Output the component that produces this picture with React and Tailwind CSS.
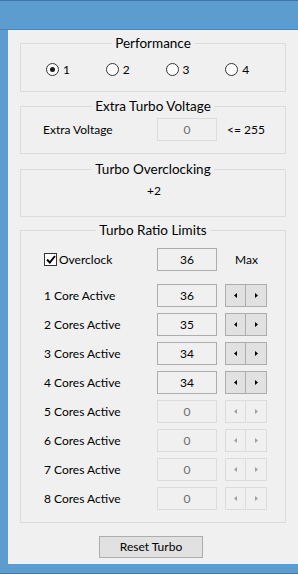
import React, {useState} from 'react';

const font = {fontFamily: '"Lato", "Liberation Sans", sans-serif'};

function GroupBox({title, className, children}) {
    return (
        <div className={"relative mx-[12px] border border-[#dcdcdc] " + className}>
            <div className="absolute left-0 right-0 -top-[10px] flex justify-center">
                <span className="bg-[#f0f0f0] px-[3px] text-[13.5px] leading-[18px] text-black">{title}</span>
            </div>
            {children}
        </div>
    );
}

function Radio({label, checked, onClick}) {
    return (
        <div className="flex w-[60px] items-center gap-[4px]" onClick={onClick}>
            <div className="flex h-[13px] w-[13px] items-center justify-center rounded-full border border-[#333] bg-white">
                {checked && <div className="h-[5px] w-[5px] rounded-full bg-[#1a1a1a]"/>}
            </div>
            <span className="text-[12px] leading-[15px]">{label}</span>
        </div>
    );
}

function ValueBox({value, enabled}) {
    return (
        <div
            className={"flex h-[23px] w-[60px] items-center justify-center border bg-[#f0f0f0] text-[12px] " +
                (enabled ? "border-[#adadad] text-black" : "border-[#dcdcdc] text-[#6d6d6d]")}>
            {value}
        </div>
    );
}

function Spinner({enabled}) {
    const btn = enabled
        ? "border-[#adadad] bg-[#e1e1e1]"
        : "border-[#dcdcdc] bg-[#f0f0f0]";
    const arrow = enabled ? "#000" : "#a0a0a0";
    return (
        <div className="flex h-[23px]">
            <div className={"flex w-[21px] items-center justify-center border " + btn}>
                <svg width="3" height="5" viewBox="0 0 3 5">
                    <path d="M3 0 L0 2.5 L3 5 Z" fill={arrow}/>
                </svg>
            </div>
            <div className={"-ml-px flex w-[22px] items-center justify-center border " + btn}>
                <svg width="3" height="5" viewBox="0 0 3 5">
                    <path d="M0 0 L3 2.5 L0 5 Z" fill={arrow}/>
                </svg>
            </div>
        </div>
    );
}

const cores = [
    {label: "1 Core Active", value: 36, enabled: true},
    {label: "2 Cores Active", value: 35, enabled: true},
    {label: "3 Cores Active", value: 34, enabled: true},
    {label: "4 Cores Active", value: 34, enabled: true},
    {label: "5 Cores Active", value: 0, enabled: false},
    {label: "6 Cores Active", value: 0, enabled: false},
    {label: "7 Cores Active", value: 0, enabled: false},
    {label: "8 Cores Active", value: 0, enabled: false},
];

export default function App() {
    // selected performance mode
    const [mode, setMode] = useState(1);

    return (
        <div className="flex h-[574px] w-[298px] flex-col overflow-hidden border-y border-[#3f78a8] bg-[#5d9ccf] text-black" style={font}>
            {/* title bar */}
            <div className="h-[29px] shrink-0 border-b border-[#4e86b8]"/>

            <div className="ml-[8px] flex h-[534px] flex-col bg-[#f0f0f0]">
                <GroupBox title="Performance" className="mt-[13px] h-[49px]">
                    <div className="mt-[18px] flex pl-[25px]">
                        {[1, 2, 3, 4].map((n) => (
                            <Radio key={n} label={n} checked={mode === n} onClick={() => setMode(n)}/>
                        ))}
                    </div>
                </GroupBox>

                <GroupBox title="Extra Turbo Voltage" className="mt-[14px] h-[48px]">
                    <div className="mt-[11px] flex items-center">
                        <span className="w-[136px] pl-[22px] text-[12px]">Extra Voltage</span>
                        <ValueBox value={0} enabled={false}/>
                        <span className="ml-[10px] text-[12px]">&lt;= 255</span>
                    </div>
                </GroupBox>

                <GroupBox title="Turbo Overclocking" className="mt-[15px] h-[48px]">
                    <div className="mt-[13px] pl-[126px] text-[12px] leading-[16px]">+2</div>
                </GroupBox>

                <GroupBox title="Turbo Ratio Limits" className="mt-[13px] h-[293px]">
                    <div className="mt-[17px] flex items-center">
                        <div className="flex w-[136px] items-center pl-[23px]">
                            <div className="flex h-[13px] w-[13px] items-center justify-center border border-[#333] bg-white">
                                <svg width="10" height="9" viewBox="0 0 10 9">
                                    <path d="M1 4.5 L3.8 7.5 L9 1" stroke="#000" strokeWidth="2" fill="none"/>
                                </svg>
                            </div>
                            <span className="ml-[2px] text-[12px]">Overclock</span>
                        </div>
                        <ValueBox value={36} enabled/>
                        <span className="ml-[18px] text-[12px]">Max</span>
                    </div>

                    <div className="mt-[13px] flex flex-col gap-[6px]">
                        {cores.map((c) => (
                            <div key={c.label} className="flex items-center">
                                <span className="w-[136px] pl-[23px] text-[12px]">{c.label}</span>
                                <ValueBox value={c.value} enabled={c.enabled}/>
                                <div className="ml-[8px]">
                                    <Spinner enabled={c.enabled}/>
                                </div>
                            </div>
                        ))}
                    </div>
                </GroupBox>

                <div className="mt-[13px] flex justify-center pr-[4px]">
                    <button className="h-[22px] w-[104px] border border-[#adadad] bg-[#e1e1e1] text-[12px] leading-none">
                        Reset Turbo
                    </button>
                </div>
            </div>
        </div>
    );
}
